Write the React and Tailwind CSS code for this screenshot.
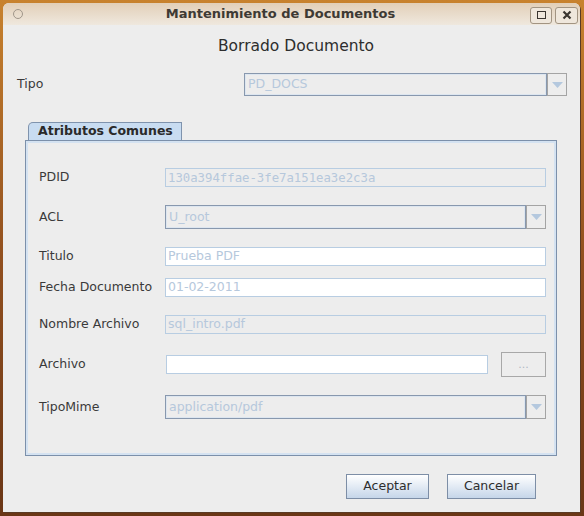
import React from 'react';

const label = "text-[12.5px] text-[#3a3a3a]";
const dis = "text-[#b6c8dc]";

function Arrow() {
    return (
        <div className="w-[20px] h-full border border-[#a4a4a4] bg-[#ededed] flex items-center justify-center">
            <svg width="11" height="6" viewBox="0 0 11 6"><path d="M0 0 L11 0 L5.5 6 Z" fill="#b4c8de" /></svg>
        </div>
    );
}

function Combo({ value, className }) {
    return (
        <div className={`flex ${className}`}>
            <div className="flex-1 h-full border border-[#8898ae] bg-[#ededed] shadow-[inset_0_0_0_1px_#dde6f0] flex items-center px-[3px]">
                <span className={`text-[12.5px] ${dis}`}>{value}</span>
            </div>
            <Arrow />
        </div>
    );
}

function Field({ value, white, mono, className }) {
    return (
        <div className={`h-[19px] border border-[#b8cde2] flex items-center px-[2px] ${white ? 'bg-white' : 'bg-[#ededed]'} ${className}`}>
            <span className={`${mono ? "font-['DejaVu_Sans_Mono',monospace] text-[12.3px]" : 'text-[12.5px]'} ${dis}`}>{value}</span>
        </div>
    );
}

function Row({ name, children, h, mt }) {
    return (
        <div className={`flex items-center ${h} ${mt}`}>
            <div className={`w-[126px] ${label}`}>{name}</div>
            <div className="flex-1 h-full flex items-center">{children}</div>
        </div>
    );
}

function Button({ children, w }) {
    return (
        <button className={`${w} h-[25px] border border-[#7d8ea6] bg-gradient-to-b from-white to-[#c6d6e9] text-[12.5px] text-[#2e2e2e]`}>
            {children}
        </button>
    );
}

export default function App() {
    return (
        <div className="w-[584px] h-[516px] bg-gradient-to-b from-[#c8822e] via-[#92501f] to-[#6a3616] pt-[3px] pl-[3px] font-['DejaVu_Sans',sans-serif]">
            <div className="w-[577px] h-[509px] bg-[#ededed] rounded-t-[6px] flex flex-col shadow-[1px_1px_0_#5a3a24]">
                {/* title bar */}
                <div className="h-[22px] rounded-t-[6px] bg-gradient-to-b from-[#e2cfb8] to-[#efe8de] flex items-center">
                    <div className="ml-[10px] w-[10px] h-[10px] rounded-full border border-[#a0968a]" />
                    <div className="flex-1 text-center text-[13px] font-bold text-[#3e3a34] pl-[8px]">Mantenimiento de Documentos</div>
                    <div className="flex gap-[3px] mr-[2px] mt-[2px]">
                        <div className="w-[22px] h-[17px] border border-[#a29482] rounded-[3px] bg-[#efe7dc] flex items-center justify-center">
                            <div className="w-[9px] h-[8px] border-[1.5px] border-[#3a3530]" />
                        </div>
                        <div className="w-[23px] h-[17px] border border-[#a29482] rounded-[3px] bg-[#efe7dc] flex items-center justify-center">
                            <svg width="10" height="10" viewBox="0 0 10 10"><path d="M1.5 1.5 L8.5 8.5 M8.5 1.5 L1.5 8.5" stroke="#3a3530" strokeWidth="2.2" /></svg>
                        </div>
                    </div>
                </div>

                <div className="text-center text-[15.5px] text-[#2e2e2e] mt-[10px] pl-[9px]">Borrado Documento</div>

                {/* Tipo */}
                <div className="flex items-center h-[23px] mt-[15px] pl-[14px] pr-[13px]">
                    <div className={`w-[227px] ${label}`}>Tipo</div>
                    <Combo value="PD_DOCS" className="flex-1 h-full" />
                </div>

                {/* tabbed panel */}
                <div className="ml-[22px] mt-[26px] w-[532px]">
                    <div className="ml-[3px] w-[154px] h-[18px] border border-b-0 border-[#7f93ad] rounded-tl-[5px] bg-[#c8dcf1] flex items-center pl-[9px]">
                        <span className="text-[12.5px] font-bold text-[#2a2a2a]">Atributos Comunes</span>
                    </div>
                    <div className="h-[316px] border border-[#7c90aa] shadow-[inset_0_0_0_2px_#d4e2f1] bg-[#ededed] pl-[13px] pr-[10px] flex flex-col">
                        <Row name="PDID" h="h-[19px]" mt="mt-[27px]">
                            <Field value="130a394ffae-3fe7a151ea3e2c3a" mono className="w-full" />
                        </Row>
                        <Row name="ACL" h="h-[24px]" mt="mt-[18px]">
                            <Combo value="U_root" className="w-full h-full" />
                        </Row>
                        <Row name="Titulo" h="h-[19px]" mt="mt-[18px]">
                            <Field value="Prueba PDF" white className="w-full" />
                        </Row>
                        <Row name="Fecha Documento" h="h-[19px]" mt="mt-[12px]">
                            <Field value="01-02-2011" white className="w-full" />
                        </Row>
                        <Row name="Nombre Archivo" h="h-[19px]" mt="mt-[18px]">
                            <Field value="sql_intro.pdf" className="w-full" />
                        </Row>
                        <Row name="Archivo" h="h-[25px]" mt="mt-[18px]">
                            <Field white className="w-[322px] ml-[1px]" />
                            <div className="ml-auto w-[45px] h-[25px] border border-[#a8a8a8] flex items-center justify-center text-[11px] text-[#b0b8c4]">...</div>
                        </Row>
                        <Row name="TipoMime" h="h-[24px]" mt="mt-[18px]">
                            <Combo value="application/pdf" className="w-full h-full" />
                        </Row>
                    </div>
                </div>

                {/* buttons */}
                <div className="flex justify-end gap-[18px] mt-[18px] pr-[44px]">
                    <Button w="w-[83px]">Aceptar</Button>
                    <Button w="w-[89px]">Cancelar</Button>
                </div>
            </div>
        </div>
    );
}
